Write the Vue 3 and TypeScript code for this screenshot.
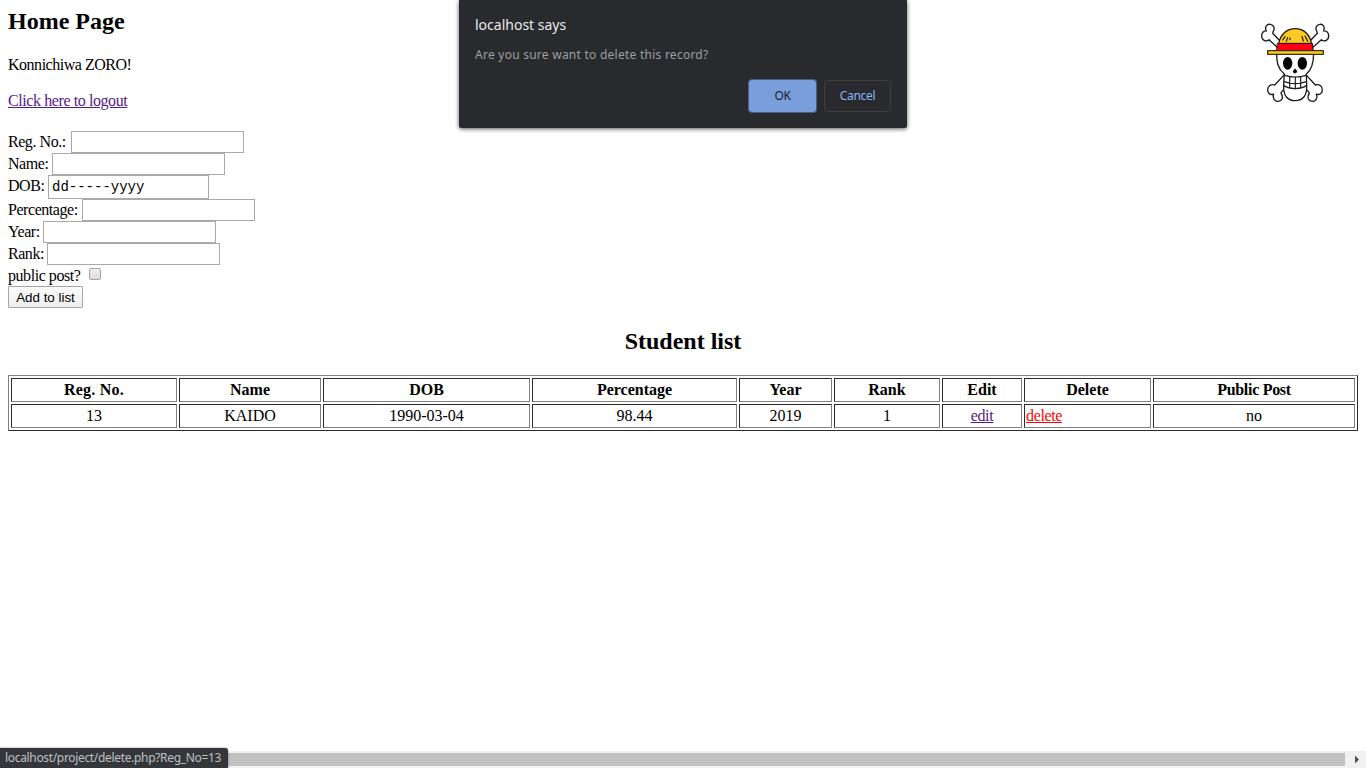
<script setup lang="ts">
interface Field {
  label: string
  labelWidth: number
  kind: 'text' | 'date'
}

const fields: Field[] = [
  { label: 'Reg. No.:', labelWidth: 63, kind: 'text' },
  { label: 'Name:', labelWidth: 44, kind: 'text' },
  { label: 'DOB:', labelWidth: 40, kind: 'date' },
  { label: 'Percentage:', labelWidth: 74, kind: 'text' },
  { label: 'Year:', labelWidth: 35, kind: 'text' },
  { label: 'Rank:', labelWidth: 39, kind: 'text' },
]

const columns: { title: string; width: number }[] = [
  { title: 'Reg. No.', width: 166 },
  { title: 'Name', width: 142 },
  { title: 'DOB', width: 207 },
  { title: 'Percentage', width: 205 },
  { title: 'Year', width: 93 },
  { title: 'Rank', width: 106 },
  { title: 'Edit', width: 80 },
  { title: 'Delete', width: 127 },
  { title: 'Public Post', width: 202 },
]
</script>

<template>
  <div class="page">
    <main class="content">
      <h2 class="title">Home Page</h2>
      <p class="greeting">Konnichiwa ZORO!</p>
      <a class="logout" href="#">Click here to logout</a>

      <form class="form" @submit.prevent>
        <div v-for="f in fields" :key="f.label" class="row" :class="f.kind">
          <span class="label" :style="{ width: f.labelWidth + 'px' }">{{ f.label }}</span>
          <span class="field"><template v-if="f.kind === 'date'">dd-----yyyy</template></span>
        </div>
        <div class="row public">
          <span class="label">public post?</span>
          <span class="check"></span>
        </div>
        <button class="add" type="button">Add to list</button>
      </form>

      <h2 class="list-title">Student list</h2>
      <table class="students">
        <colgroup>
          <col v-for="c in columns" :key="c.title" :style="{ width: c.width + 'px' }" />
        </colgroup>
        <thead>
          <tr>
            <th v-for="c in columns" :key="c.title">{{ c.title }}</th>
          </tr>
        </thead>
        <tbody>
          <tr>
            <td>13</td>
            <td>KAIDO</td>
            <td>1990-03-04</td>
            <td>98.44</td>
            <td>2019</td>
            <td>1</td>
            <td><a class="edit" href="#">edit</a></td>
            <td class="left"><a class="delete" href="#">delete</a></td>
            <td>no</td>
          </tr>
        </tbody>
      </table>
    </main>

    <svg class="logo" viewBox="0 0 270 285" width="90" height="95" stroke-linejoin="round" stroke-linecap="round">
      <g fill="#fff" stroke="#1c1c1c" stroke-width="4">
        <path d="M83 98 L57 74 C48 82 34 75 35 62 C35 52 42 47 49 48 C43 36 51 26 61 28 C72 30 75 41 70 48 L68 55 L96 84 Z" />
        <path d="M187 98 L214 74 C224 82 237 75 236 62 C236 52 229 47 221 48 C227 36 218 26 209 28 C198 30 195 41 200 48 L202 55 L174 84 Z" />
        <path d="M104 178 L74 210 C64 206 52 213 53 226 C54 237 64 241 71 237 C67 249 74 261 85 259 C96 258 101 247 94 237 L93 233 L125 198 Z" />
        <path d="M167 178 L196 210 C207 206 218 213 217 226 C216 237 207 241 199 237 C204 249 197 261 186 259 C175 258 170 247 177 237 L178 233 L145 198 Z" />
        <path d="M101 212 C99 243 114 257 135 257 C157 257 172 243 170 212 Z" />
        <path d="M80 114 C80 143 84 162 103 177 L101 211 C114 224 157 224 170 211 L169 177 C187 163 191 143 191 114 Z" />
        <path fill="none" stroke-width="3.5" d="M104 181 C124 187 149 187 168 181 M102 200 C123 207 149 207 169 200 M119 185 L119 218 M136 186 L136 221 M152 185 L152 218" />
      </g>
      <ellipse cx="113" cy="145" rx="14" ry="19" fill="#000" />
      <ellipse cx="157" cy="145" rx="14" ry="19" fill="#000" />
      <path d="M135 163 C129 166 128 174 134 174 C142 175 143 166 135 163 Z" fill="#000" stroke="#000" stroke-width="2" />
      <path d="M86 87 C90 58 111 41 136 41 C161 41 180 58 185 87 Z" fill="#fcca23" stroke="#221a10" stroke-width="4" />
      <path d="M83 85 H187 L190 108 H81 Z" fill="#fb0019" stroke="#221010" stroke-width="3" />
      <rect x="53" y="107" width="167" height="11" fill="#fcca23" stroke="#3d3010" stroke-width="4" />
      <path fill="none" stroke="#1d190c" stroke-width="3.5" d="M105 65 L98 75 M113 68 L109 79 M121 69 L119 74 M156 64 L160 78 M165 63 L173 79" />
    </svg>

    <section class="dialog">
      <div class="dialog-title">localhost says</div>
      <div class="dialog-text">Are you sure want to delete this record?</div>
      <div class="dialog-actions">
        <button class="ok" type="button"><span>OK</span></button>
        <button class="cancel" type="button"><span>Cancel</span></button>
      </div>
    </section>

    <footer class="scrollbar">
      <div class="thumb"></div>
      <svg class="arrow" viewBox="0 0 17 17" width="17" height="17"><path d="M6 4.5 L10 8.5 L6 12.5 Z" fill="#505050" /></svg>
    </footer>
    <div class="status"><span>localhost/project/delete.php?Reg_No=13</span></div>
  </div>
</template>

<style>
body {
  margin: 0;
  overflow: hidden;
}
</style>

<style scoped>
* {
  box-sizing: border-box;
}
.page {
  position: relative;
  width: 1366px;
  height: 768px;
  overflow: hidden;
  display: flex;
  flex-direction: column;
  background: #fff;
  color: #000;
  font: 16px/20px "Liberation Serif", serif;
}
.content {
  flex: 1;
  padding: 8px 8px 0;
}
.title,
.list-title {
  margin: 0;
  font-size: 24px;
  line-height: 27px;
  white-space: nowrap;
}
.greeting {
  margin: 20px 0 16px;
  letter-spacing: -0.48px;
}
.logout {
  display: block;
  width: max-content;
  letter-spacing: -0.41px;
}
.logout,
.edit {
  color: #551a8b;
}
.edit,
.delete {
  letter-spacing: -0.35px;
}
.delete {
  color: #f00;
}
.form {
  display: flex;
  flex-direction: column;
  margin-top: 20px;
}
.row {
  display: flex;
  height: 22px;
}
.row.date {
  height: 24px;
}
.label {
  flex: none;
  line-height: 22px;
  letter-spacing: -0.45px;
  white-space: nowrap;
}
.field {
  width: 173px;
  height: 22px;
  border: 1px solid #a9a9a9;
}
.date .field {
  width: 161px;
  height: 24px;
  padding-left: 3px;
  font: 14px/22px "Liberation Mono", monospace;
}
.public {
  height: 21px;
}
.public .label {
  width: 81px;
}
.check {
  width: 12px;
  height: 12px;
  margin-top: 3px;
  border: 1px solid #a5a5a5;
  border-radius: 2px;
  background: linear-gradient(#ededed, #dedede);
}
.add {
  width: 75px;
  height: 22px;
  padding: 1px 0 0;
  border: 1px solid #a6a6a6;
  border-radius: 1px;
  background: linear-gradient(#fbfbfb, #eee);
  color: #000;
  font: 13.333px/19px "Liberation Sans", Arial, sans-serif;
  white-space: nowrap;
}
.list-title {
  margin: 20px 0;
  text-align: center;
}
.students {
  width: 1350px;
  table-layout: fixed;
  border: 1px solid;
  border-color: #808080 #2c2c2c #2c2c2c #808080;
  border-collapse: separate;
  border-spacing: 2px;
}
.students th,
.students td {
  height: 24px;
  padding: 1px;
  border: 1px solid;
  border-color: #2c2c2c #808080 #808080 #2c2c2c;
  text-align: center;
  white-space: nowrap;
}
.students th:first-child {
  letter-spacing: 0.25px;
}
.students th:last-child {
  letter-spacing: -0.3px;
}
.students td.left {
  text-align: left;
}
.logo {
  position: absolute;
  left: 1250px;
  top: 15px;
}
.dialog {
  position: absolute;
  left: 459px;
  top: 0;
  width: 448px;
  height: 128px;
  padding: 15px 16px 0;
  border-radius: 0 0 2px 2px;
  background: #292a2d;
  box-shadow: 0 1px 4px rgba(0, 0, 0, 0.65);
  font-family: "Noto Sans", sans-serif;
  white-space: nowrap;
}
.dialog-title {
  color: #e8eaed;
  font-size: 14px;
  line-height: 20px;
}
.dialog-text {
  margin-top: 10px;
  color: #9aa0a6;
  font-size: 12px;
  line-height: 20px;
  letter-spacing: 0.25px;
}
.dialog-actions {
  display: flex;
  justify-content: flex-end;
  align-items: center;
  gap: 7px;
  margin-top: 14px;
}
.dialog-actions button {
  padding: 0;
  border-radius: 4px;
  font: 12px/16px "Noto Sans", sans-serif;
  letter-spacing: -0.3px;
}
.dialog-actions .ok {
  width: 69px;
  height: 34px;
  border: 1px solid #4b5f86;
  background: #7a9edb;
  color: #202124;
}
.dialog-actions .cancel {
  width: 67px;
  height: 32px;
  border: 1px solid #3c4043;
  background: #292a2d;
  color: #8ab4f8;
}
.scrollbar {
  display: flex;
  align-items: center;
  height: 17px;
  background: #f1f1f1;
}
.thumb {
  flex: 1;
  height: 13px;
  margin-right: 4px;
  background: #c1c1c1;
}
.status {
  position: absolute;
  left: 0;
  bottom: 0;
  width: 228px;
  height: 20px;
  padding-left: 5px;
  border-radius: 0 3px 0 0;
  background: #35363a;
  box-shadow: 0 0 2px rgba(0, 0, 0, 0.5);
  color: #bdc1c6;
  font: 12px/20px "Noto Sans", sans-serif;
  letter-spacing: -0.33px;
  white-space: nowrap;
}
</style>
